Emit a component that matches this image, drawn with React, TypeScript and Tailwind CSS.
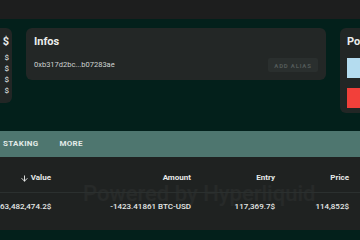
import { ArrowDown } from "lucide-react";

const font = { fontFamily: "Roboto, 'Noto Sans', sans-serif" };

function SideCard() {
  return (
    <div className="-ml-[48px] flex h-[75px] w-[60px] shrink-0 flex-col items-end rounded-[6px] bg-[#222625] pr-[3px] pt-[7px]">
      <div className="text-[11px] font-bold leading-[14px] text-[#e8eaea]">$</div>
      <div className="mt-[3px] flex flex-col items-end text-[8px] font-medium leading-[11px] text-[#d6d9d8]">
        <span>$</span>
        <span>$</span>
        <span>$</span>
        <span>$</span>
      </div>
    </div>
  );
}

function InfosCard() {
  return (
    <div className="flex h-[52px] w-[300px] shrink-0 flex-col rounded-[6px] bg-[#232726] px-[8px] pt-[7px]">
      <div className="text-[11px] font-bold leading-[14px] text-[#eceeed]">Infos</div>
      <div className="mt-[1px] flex items-center justify-between">
        <span className="pt-[8px] text-[7.5px] leading-[10px] text-[#cfd3d2]">0xb317d2bc...b07283ae</span>
        <button
          type="button"
          className="mt-[8px] h-[14px] w-[50px] rounded-[2px] bg-[#2a2f2e] text-[6px] font-bold tracking-[0.8px] text-[#535a59]"
        >
          ADD ALIAS
        </button>
      </div>
    </div>
  );
}

function PositionsCard() {
  return (
    <div className="flex h-[85px] w-[80px] shrink-0 flex-col gap-[10px] rounded-[6px] bg-[#222625] pl-[7px] pt-[7px]">
      <div className="text-[11px] font-bold leading-[14px] text-[#eceeed]">Po</div>
      <div className="-mt-[1px] h-[20px] w-[60px] bg-[#b4dcef]" />
      <div className="h-[20px] w-[60px] bg-[#f2403a]" />
    </div>
  );
}

const cols = "grid grid-cols-[51px_140px_84px_74px] pr-[11px]";

export default function App() {
  return (
    <div className="h-[240px] w-[360px] overflow-hidden bg-[#03201b]" style={font}>
      <div className="h-[19px] bg-[#1d1e1e]" />
      <div className="mt-[9px] flex items-start gap-[14px]">
        <SideCard />
        <InfosCard />
        <PositionsCard />
      </div>

      <div className="mt-[18px] flex h-[26px] items-center gap-[21px] bg-[#4e766f] pl-[3px] text-[8px] font-bold tracking-[0.3px] text-[#e3ebe9]">
        <span>STAKING</span>
        <span>MORE</span>
      </div>

      <div className="relative h-[73px] bg-[#1f2221]">
        <div className="pointer-events-none absolute left-[83px] top-[20px] whitespace-nowrap text-[22px] font-medium text-white/[0.035]">
          Powered by Hyperliquid
        </div>
        <div className={`${cols} relative h-[36px] items-end border-b border-[#2b302f] pb-[8px] text-[8px] font-bold text-[#e6e9e8]`}>
          <span className="flex items-center justify-end gap-[2px]">
            <ArrowDown className="h-[9px] w-[9px]" strokeWidth={2.5} />
            Value
          </span>
          <span className="text-right">Amount</span>
          <span className="text-right">Entry</span>
          <span className="text-right">Price</span>
        </div>
        <div className={`${cols} relative h-[27px] items-center text-[8px] font-medium text-[#e6e9e8]`}>
          <span className="whitespace-nowrap text-right">63,482,474.2$</span>
          <span className="whitespace-nowrap text-right">-1423.41861 BTC-USD</span>
          <span className="text-right">117,369.7$</span>
          <span className="text-right">114,852$</span>
        </div>
      </div>
    </div>
  );
}
